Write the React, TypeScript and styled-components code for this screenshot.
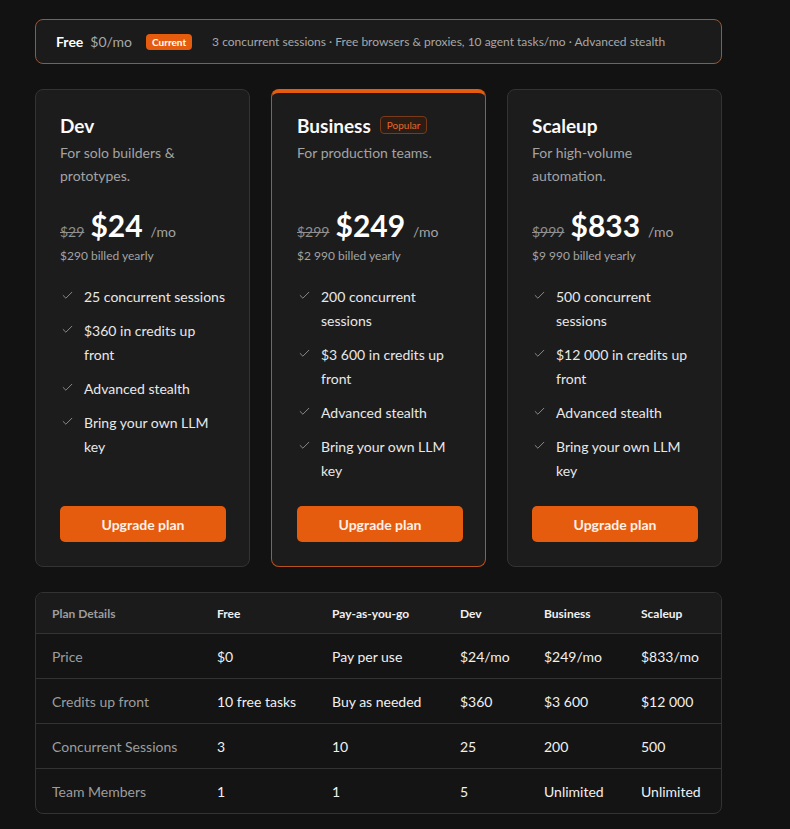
import React from 'react';
import styled, { createGlobalStyle } from 'styled-components';
import { Check } from 'lucide-react';

const GlobalStyle = createGlobalStyle`
  html, body {
    margin: 0;
    padding: 0;
    background: #121212;
  }
  body {
    font-family: Lato, 'Noto Sans', sans-serif;
    color: #f2f2f2;
  }
`;

const Page = styled.div`
  width: 687px;
  padding: 19px 0 16px 35px;
  display: flex;
  flex-direction: column;
`;

const FreeBanner = styled.div`
  height: 45px;
  box-sizing: border-box;
  border: 1px solid #a4532a;
  border-radius: 8px;
  background: #1b1b1b;
  display: flex;
  align-items: center;
  padding: 0 20px;
  font-size: 12px;
`;

const FreeName = styled.span`
  font-weight: 700;
  font-size: 14px;
  color: #fff;
  margin-right: 7px;
`;

const FreePrice = styled.span`
  font-size: 14px;
  color: #a8a8a8;
  margin-right: 14px;
`;

const CurrentBadge = styled.span`
  background: #e65c0f;
  color: #fff;
  font-size: 10px;
  font-weight: 700;
  padding: 2px 6px;
  border-radius: 4px;
  margin-right: 20px;
`;

const FreeText = styled.span`
  color: #a8a8a8;
`;

const Cards = styled.div`
  display: grid;
  grid-template-columns: repeat(3, 215px);
  gap: 21px;
  margin-top: 25px;
`;

const Card = styled.div<{ $popular?: boolean }>`
  height: 478px;
  box-sizing: border-box;
  background: #1c1c1d;
  border: 1px solid ${(p) => (p.$popular ? '#b9521f' : '#333334')};
  border-top: ${(p) => (p.$popular ? '4px solid #e65c0f' : '1px solid #333334')};
  border-radius: 8px;
  padding: ${(p) => (p.$popular ? '19px 24px 24px 25px' : '22px 24px 24px 24px')};
  display: flex;
  flex-direction: column;
`;

const TitleRow = styled.div`
  display: flex;
  align-items: center;
  gap: 9px;
  height: 26px;
`;

const Title = styled.h2`
  margin: 0;
  font-size: 19px;
  font-weight: 700;
  color: #fafafa;
`;

const PopularBadge = styled.span`
  border: 1px solid #7a3a1a;
  background: #2a1d16;
  color: #e4682a;
  font-size: 10px;
  padding: 0 6px;
  border-radius: 4px;
  line-height: 16px;
`;

const Desc = styled.p`
  margin: 3px 0 0;
  font-size: 14px;
  line-height: 23px;
  color: #a3a3a3;
  min-height: 46px;
`;

const PriceRow = styled.div`
  display: flex;
  align-items: baseline;
  gap: 6px;
  margin-top: 21px;
`;

const OldPrice = styled.span`
  font-size: 14px;
  color: #8f8f8f;
  text-decoration: line-through;
`;

const Price = styled.span`
  font-size: 30px;
  font-weight: 700;
  color: #fff;
  line-height: 34px;
`;

const Per = styled.span`
  font-size: 14px;
  color: #a3a3a3;
  margin-left: 2px;
`;

const Billed = styled.div`
  font-size: 12px;
  color: #a3a3a3;
  margin-top: 6px;
`;

const Features = styled.ul`
  list-style: none;
  margin: 22px 0 0;
  padding: 0 0 0 1px;
  display: flex;
  flex-direction: column;
  gap: 10px;
`;

const Feature = styled.li`
  display: flex;
  align-items: flex-start;
  gap: 10px;
  font-size: 14px;
  line-height: 24px;
  color: #e8e8e8;
`;

const CheckMark = styled(Check)`
  flex-shrink: 0;
  margin-top: 4px;
  color: #9a9a9a;
`;

const UpgradeButton = styled.button`
  margin-top: auto;
  height: 36px;
  width: 166px;
  border: none;
  border-radius: 5px;
  background: #e65c0f;
  color: #fff1e8;
  font-family: inherit;
  font-size: 14px;
  font-weight: 700;
  cursor: pointer;
`;

const Table = styled.div`
  margin-top: 25px;
  border: 1px solid #333334;
  border-radius: 8px;
  overflow: hidden;
  background: #141414;
`;

const Row = styled.div<{ $head?: boolean }>`
  display: grid;
  grid-template-columns: 165px 115px 128px 84px 97px 1fr;
  align-items: center;
  height: ${(p) => (p.$head ? '40px' : '44px')};
  padding-left: 16px;
  background: ${(p) => (p.$head ? '#1b1b1c' : 'transparent')};
  & + & {
    border-top: 1px solid #333334;
  }
`;

const Cell = styled.div<{ $head?: boolean; $label?: boolean }>`
  font-size: ${(p) => (p.$head ? '12px' : '14px')};
  font-weight: ${(p) => (p.$head ? 700 : 400)};
  color: ${(p) => (p.$label ? '#9d9d9d' : '#f0f0f0')};
`;

const plans = [
  {
    name: 'Dev',
    desc: 'For solo builders & prototypes.',
    old: '$29',
    price: '$24',
    billed: '$290 billed yearly',
    features: ['25 concurrent sessions', '$360 in credits up front', 'Advanced stealth', 'Bring your own LLM key'],
  },
  {
    name: 'Business',
    desc: 'For production teams.',
    old: '$299',
    price: '$249',
    billed: '$2 990 billed yearly',
    popular: true,
    features: ['200 concurrent sessions', '$3 600 in credits up front', 'Advanced stealth', 'Bring your own LLM key'],
  },
  {
    name: 'Scaleup',
    desc: 'For high-volume automation.',
    old: '$999',
    price: '$833',
    billed: '$9 990 billed yearly',
    features: ['500 concurrent sessions', '$12 000 in credits up front', 'Advanced stealth', 'Bring your own LLM key'],
  },
];

const header = ['Plan Details', 'Free', 'Pay-as-you-go', 'Dev', 'Business', 'Scaleup'];
const rows = [
  ['Price', '$0', 'Pay per use', '$24/mo', '$249/mo', '$833/mo'],
  ['Credits up front', '10 free tasks', 'Buy as needed', '$360', '$3 600', '$12 000'],
  ['Concurrent Sessions', '3', '10', '25', '200', '500'],
  ['Team Members', '1', '1', '5', 'Unlimited', 'Unlimited'],
];

const App = () => {
  return (
    <Page>
      <GlobalStyle />
      <FreeBanner>
        <FreeName>Free</FreeName>
        <FreePrice>$0/mo</FreePrice>
        <CurrentBadge>Current</CurrentBadge>
        <FreeText>3 concurrent sessions · Free browsers &amp; proxies, 10 agent tasks/mo · Advanced stealth</FreeText>
      </FreeBanner>

      <Cards>
        {plans.map((plan) => (
          <Card key={plan.name} $popular={plan.popular}>
            <TitleRow>
              <Title>{plan.name}</Title>
              {plan.popular && <PopularBadge>Popular</PopularBadge>}
            </TitleRow>
            <Desc>{plan.desc}</Desc>
            <PriceRow>
              <OldPrice>{plan.old}</OldPrice>
              <Price>{plan.price}</Price>
              <Per>/mo</Per>
            </PriceRow>
            <Billed>{plan.billed}</Billed>
            <Features>
              {plan.features.map((f) => (
                <Feature key={f}>
                  <CheckMark size={13} strokeWidth={1.6} />
                  <span>{f}</span>
                </Feature>
              ))}
            </Features>
            <UpgradeButton>Upgrade plan</UpgradeButton>
          </Card>
        ))}
      </Cards>

      <Table>
        <Row $head>
          {header.map((h, i) => (
            <Cell key={h} $head $label={i === 0}>
              {h}
            </Cell>
          ))}
        </Row>
        {rows.map((r) => (
          <Row key={r[0]}>
            {r.map((c, i) => (
              <Cell key={i} $label={i === 0}>
                {c}
              </Cell>
            ))}
          </Row>
        ))}
      </Table>
    </Page>
  );
};

export default App;
